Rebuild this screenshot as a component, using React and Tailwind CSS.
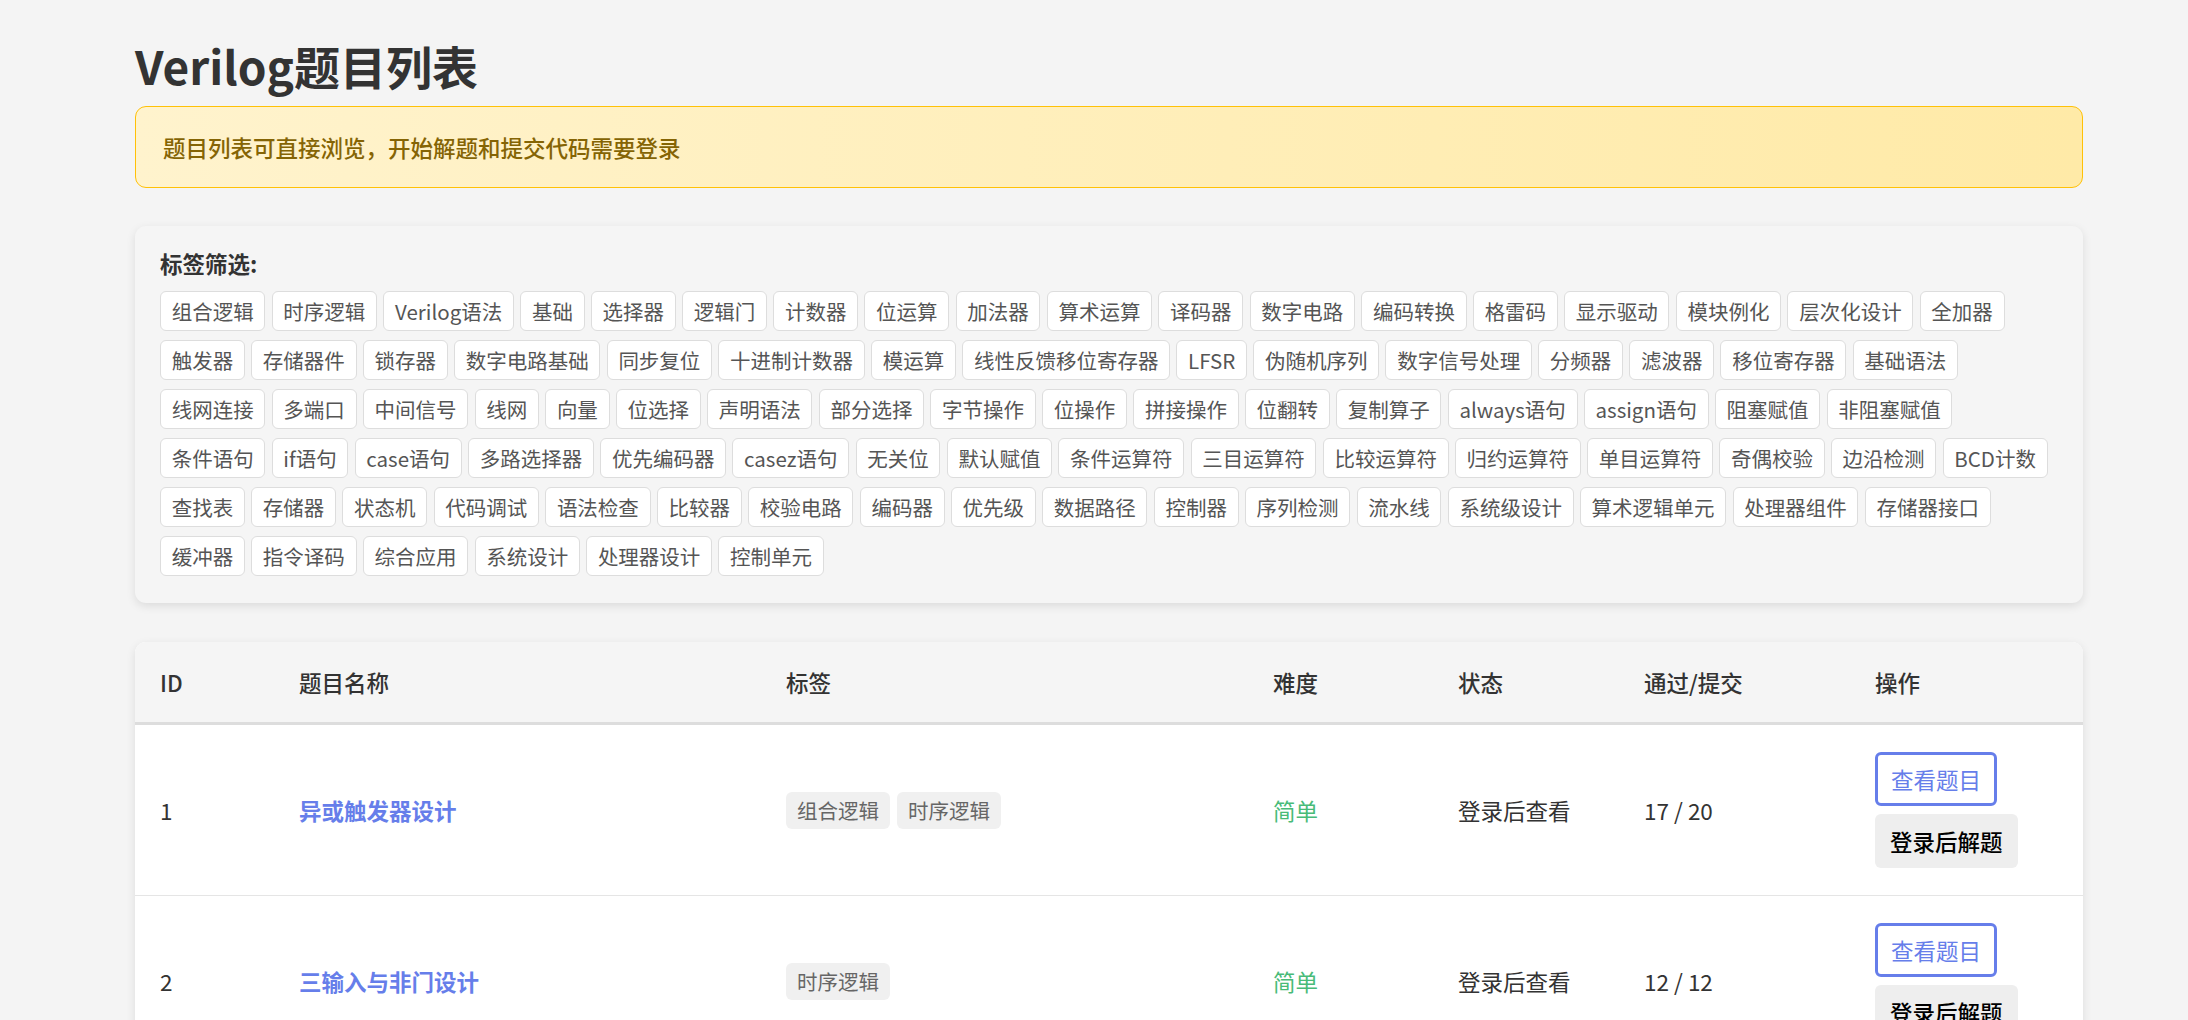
import React from 'react';

const FILTER_TAGS = [
  '组合逻辑', '时序逻辑', 'Verilog语法', '基础', '选择器', '逻辑门', '计数器', '位运算', '加法器', '算术运算',
  '译码器', '数字电路', '编码转换', '格雷码', '显示驱动', '模块例化', '层次化设计', '全加器',
  '触发器', '存储器件', '锁存器', '数字电路基础', '同步复位', '十进制计数器', '模运算', '线性反馈移位寄存器',
  'LFSR', '伪随机序列', '数字信号处理', '分频器', '滤波器', '移位寄存器', '基础语法',
  '线网连接', '多端口', '中间信号', '线网', '向量', '位选择', '声明语法', '部分选择', '字节操作', '位操作',
  '拼接操作', '位翻转', '复制算子', 'always语句', 'assign语句', '阻塞赋值', '非阻塞赋值',
  '条件语句', 'if语句', 'case语句', '多路选择器', '优先编码器', 'casez语句', '无关位', '默认赋值',
  '条件运算符', '三目运算符', '比较运算符', '归约运算符', '单目运算符', '奇偶校验', '边沿检测', 'BCD计数',
  '查找表', '存储器', '状态机', '代码调试', '语法检查', '比较器', '校验电路', '编码器', '优先级', '数据路径',
  '控制器', '序列检测', '流水线', '系统级设计', '算术逻辑单元', '处理器组件', '存储器接口',
  '缓冲器', '指令译码', '综合应用', '系统设计', '处理器设计', '控制单元',
];

const PROBLEMS = [
  { id: 1, title: '异或触发器设计', tags: ['组合逻辑', '时序逻辑'], level: '简单', status: '登录后查看', ratio: '17 / 20' },
  { id: 2, title: '三输入与非门设计', tags: ['时序逻辑'], level: '简单', status: '登录后查看', ratio: '12 / 12' },
  { id: 3, title: '四位加法器设计', tags: ['组合逻辑', '加法器'], level: '简单', status: '登录后查看', ratio: '9 / 15' },
];

const COLUMNS = [
  { label: 'ID', width: 'w-[139px]' },
  { label: '题目名称', width: 'w-[487px]' },
  { label: '标签', width: 'w-[487px]' },
  { label: '难度', width: 'w-[185px]' },
  { label: '状态', width: 'w-[186px]' },
  { label: '通过/提交', width: 'w-[231px]' },
  { label: '操作', width: 'w-[233px]' },
];

export default function App() {
  return (
    <div className="min-h-screen bg-[#f4f4f4] pl-[135px] pt-[36px] pb-10 text-[#333] font-['Noto_Sans_CJK_SC',sans-serif]">
      <div className="w-[1948px]">
        <h1 className="text-[46px] leading-[58px] font-bold text-[#333]">Verilog题目列表</h1>

        <div className="mt-[12px] rounded-[11px] border border-[#ffc107] bg-gradient-to-r from-[#fff3cd] to-[#ffeaa7] px-[27px] py-[23px]">
          <p className="text-[22.5px] leading-[34px] font-medium text-[#856404]">
            题目列表可直接浏览，开始解题和提交代码需要登录
          </p>
        </div>

        <section className="mt-[38px] rounded-[11px] bg-[#f5f5f5] px-[25px] pt-[21px] pb-[27px] shadow-[0_3px_10px_rgba(0,0,0,0.1)]">
          <h3 className="text-[22.5px] leading-[33px] font-bold text-[#333]">标签筛选:</h3>
          <div className="mt-[11px] flex flex-wrap gap-x-[6.3px] gap-y-[9px]">
            {FILTER_TAGS.map((tag) => (
              <span
                key={tag}
                className="h-[40px] flex items-center rounded-[6px] border border-[#ddd] bg-white px-[10.7px] text-[20.5px] text-[#555]"
              >
                {tag}
              </span>
            ))}
          </div>
        </section>

        <div className="mt-[39px] overflow-hidden rounded-[11px] bg-white shadow-[0_3px_10px_rgba(0,0,0,0.1)]">
          <table className="w-full table-fixed border-collapse text-left">
            <thead>
              <tr className="bg-[#f5f5f5] border-b-[3px] border-[#ddd]">
                {COLUMNS.map((col) => (
                  <th
                    key={col.label}
                    className={`${col.width} px-[25px] py-[23px] text-[22.5px] leading-[34px] font-medium text-[#333]`}
                  >
                    {col.label}
                  </th>
                ))}
              </tr>
            </thead>
            <tbody>
              {PROBLEMS.map((p) => (
                <tr key={p.id} className="border-b border-[#e5e5e5] text-[22.5px] leading-[34px]">
                  <td className="px-[25px] py-[27px] align-middle text-[#333]">{p.id}</td>
                  <td className="px-[25px] py-[27px] align-middle">
                    <span className="font-bold text-[#667eea]">{p.title}</span>
                  </td>
                  <td className="px-[25px] py-[27px] align-middle">
                    <div className="flex flex-wrap gap-[7px]">
                      {p.tags.map((t) => (
                        <span
                          key={t}
                          className="h-[37px] flex items-center rounded-[6px] bg-[#f0f0f0] px-[11px] text-[20.5px] text-[#666]"
                        >
                          {t}
                        </span>
                      ))}
                    </div>
                  </td>
                  <td className="px-[25px] py-[27px] align-middle text-[#48bb78]">{p.level}</td>
                  <td className="px-[25px] py-[27px] align-middle text-[#333]">{p.status}</td>
                  <td className="px-[25px] py-[27px] align-middle text-[#333]">{p.ratio}</td>
                  <td className="px-[25px] py-[27px] align-middle">
                    <div className="flex flex-col items-start gap-[8px]">
                      <button className="rounded-[6px] border-[3px] border-[#667eea] bg-white px-[13px] py-[7px] text-[22.5px] leading-[34px] text-[#667eea]">
                        查看题目
                      </button>
                      <button className="rounded-[6px] bg-[#eeeeee] px-[15px] py-[10px] text-[22.5px] leading-[34px] font-medium text-black">
                        登录后解题
                      </button>
                    </div>
                  </td>
                </tr>
              ))}
            </tbody>
          </table>
        </div>
      </div>
    </div>
  );
}
